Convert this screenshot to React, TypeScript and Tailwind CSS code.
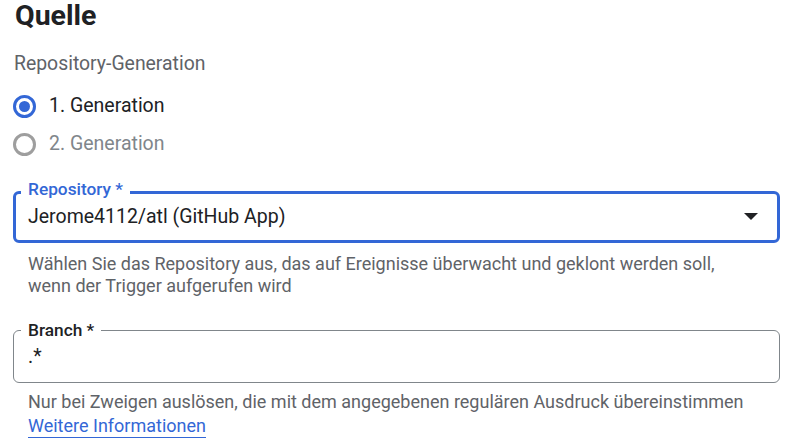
import React from 'react';

const font = { fontFamily: 'Roboto, "Liberation Sans", sans-serif' };

function Radio({ checked, label }: { checked?: boolean; label: string }) {
  return (
    <label className="flex items-center h-[38px] cursor-pointer">
      <span
        className={
          'w-[23px] h-[23px] rounded-full border-[3px] flex items-center justify-center ' +
          (checked ? 'border-[#3367d6]' : 'border-[#9e9e9e]')
        }
      >
        {checked && <span className="w-[11px] h-[11px] rounded-full bg-[#3367d6]" />}
      </span>
      <span className={'ml-[13px] text-[19.5px] ' + (checked ? 'text-[#202124]' : 'text-[#80868b]')}>
        {label}
      </span>
    </label>
  );
}

export default function App() {
  return (
    <main className="bg-white w-[799px] h-[442px] overflow-hidden pl-[13px] pr-[19px]" style={font}>
      <h1 className="text-[28.5px] leading-[32px] font-bold text-[#202124] pl-[2px]">Quelle</h1>

      <p className="mt-[20px] text-[19.4px] leading-[24px] text-[#5f6368] pl-[1px]">Repository-Generation</p>

      <div className="mt-[11px]">
        <Radio checked label="1. Generation" />
        <Radio label="2. Generation" />
      </div>

      <div className="relative mt-[28px] h-[52px] rounded-[6px] border-[3px] border-[#3367d6] flex items-center pl-[12px] pr-[19px]">
        <span className="absolute left-[5px] -top-[15px] px-[7px] bg-white text-[17.3px] leading-[20px] font-medium text-[#3367d6]">
          Repository *
        </span>
        <span className="flex-1 text-[19.5px] text-[#202124]">Jerome4112/atl (GitHub App)</span>
        <svg width="14" height="7" viewBox="0 0 14 7" className="-mt-[1px]">
          <path d="M0 0h14L7 7z" fill="#202124" />
        </svg>
      </div>

      <p className="mt-[10px] pl-[15px] text-[18px] leading-[22px] text-[#5f6368]">
        Wählen Sie das Repository aus, das auf Ereignisse überwacht und geklont werden soll,
        <br />
        wenn der Trigger aufgerufen wird
      </p>

      <div className="relative mt-[33px] h-[53px] rounded-[6px] border border-[#80868b] flex items-center pl-[14px]">
        <span className="absolute left-[7px] -top-[11px] px-[7px] bg-white text-[17.3px] leading-[20px] font-medium text-[#202124]">
          Branch *
        </span>
        <span className="text-[19.5px] text-[#202124]">.*</span>
      </div>

      <p className="mt-[7px] pl-[15px] text-[18px] leading-[24px] text-[#5f6368]">
        Nur bei Zweigen auslösen, die mit dem angegebenen regulären Ausdruck übereinstimmen
        <br />
        <a href="#" className="text-[#3367d6] underline underline-offset-[5px] decoration-1">
          Weitere Informationen
        </a>
      </p>
    </main>
  );
}
